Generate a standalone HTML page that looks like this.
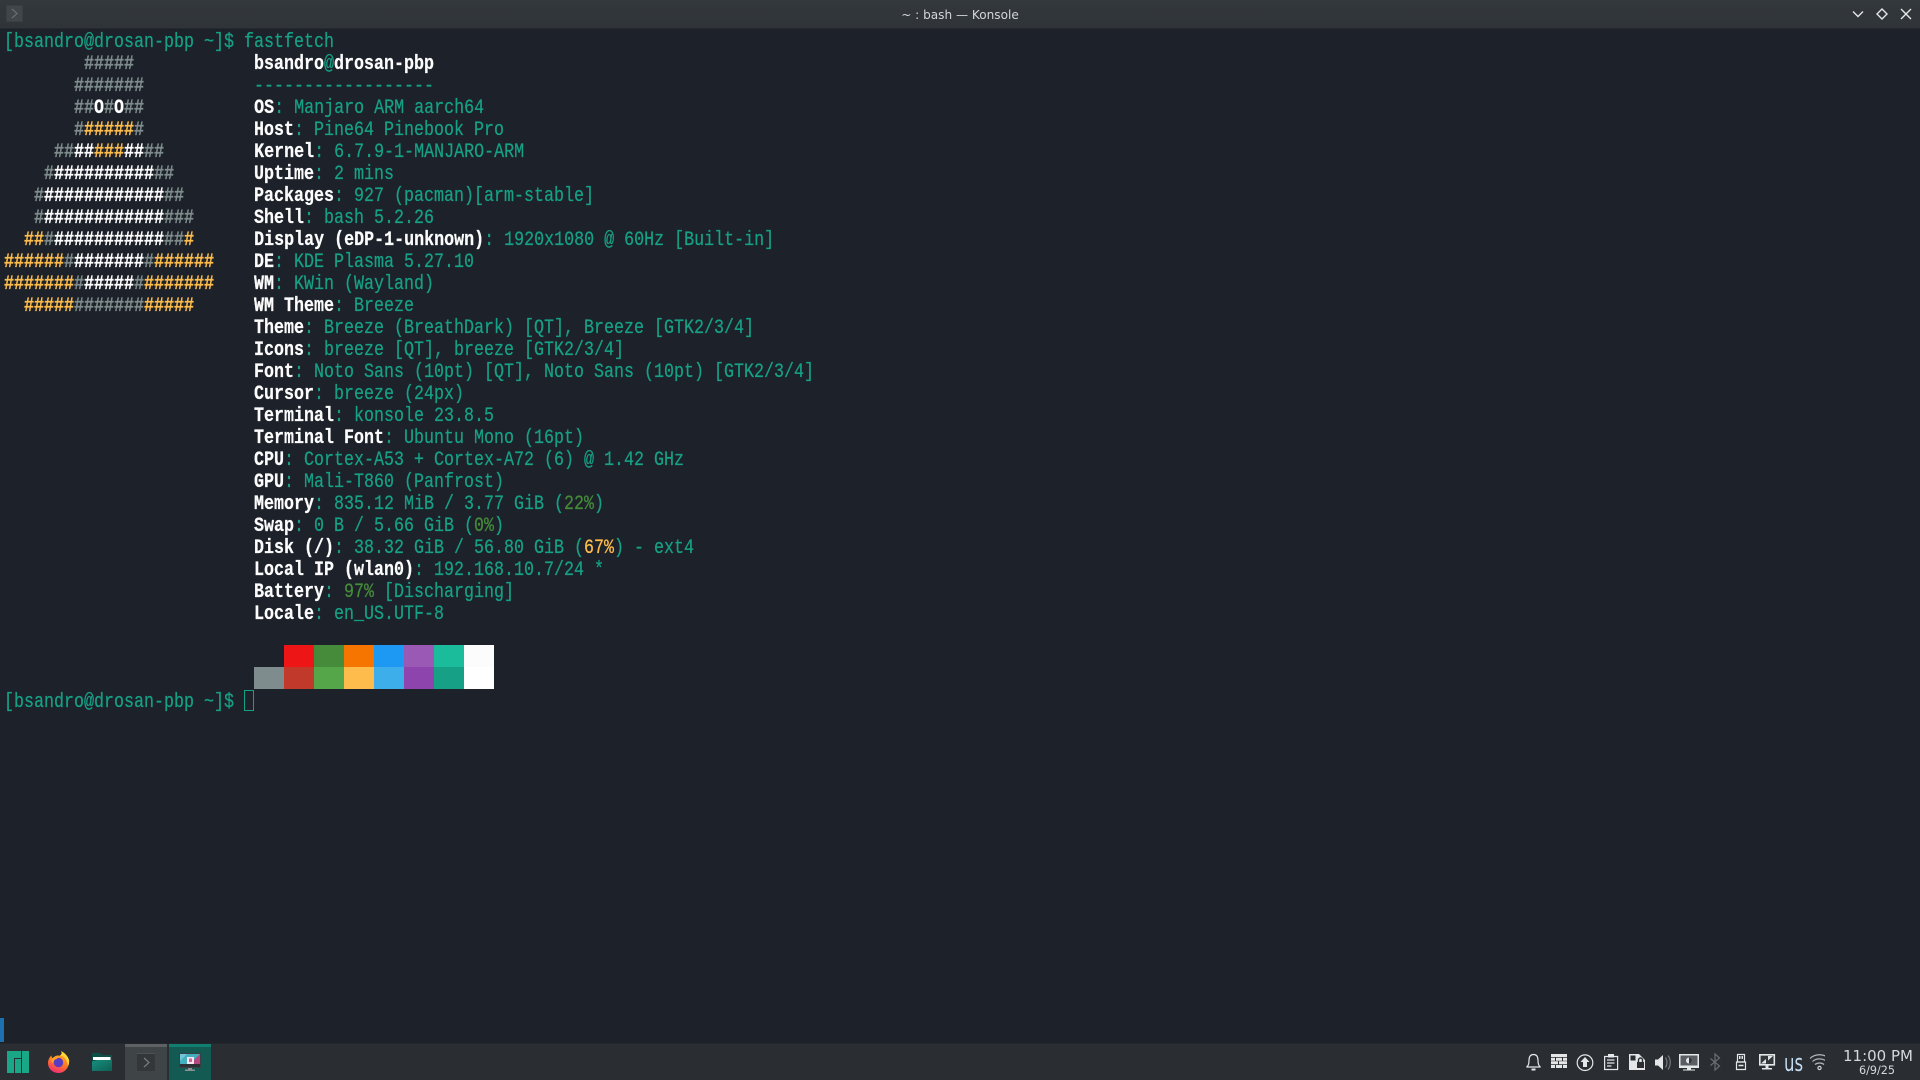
<!DOCTYPE html>
<html><head><meta charset="utf-8"><title>bash — Konsole</title>
<style>
html,body{margin:0;padding:0;width:1920px;height:1080px;overflow:hidden;background:#1d2129}
.abs{position:absolute}
#title{left:0;top:0;width:1920px;height:28px;background:linear-gradient(#33383c,#2f3438);border-bottom:1px solid #25282c;box-sizing:content-box}
#ttext{left:0;top:1px;width:1920px;text-align:center;color:#d3d6d8;font:12.1px/28px "DejaVu Sans","Liberation Sans",sans-serif}
#term{left:4px;top:32px;margin:0;font:20px/22px "Liberation Mono",monospace;color:#16a085;white-space:pre;transform:scaleX(.8332);transform-origin:0 0;-webkit-text-stroke:.25px currentColor}
b{color:#fcfcfc;font-weight:bold}
.g{color:#7f8c8d;font-weight:bold}.w{color:#fff;font-weight:bold}.o{color:#fdbc4b;font-weight:bold}
.gr{color:#458b3a}.or{color:#fdbc4b}
.sw{position:absolute;width:30px;height:22px}
#bar{left:0;top:1043px;width:1920px;height:37px;background:#2a2e32;border-top:1px solid #23262b;box-sizing:border-box}
.txt{position:absolute;color:#d6d9db;font-family:"DejaVu Sans","Liberation Sans",sans-serif;white-space:pre}
</style></head><body>
<div class="abs" id="title"></div>
<div class="abs" id="ttext">~ : bash — Konsole</div>
<svg class="abs" style="left:6px;top:5px" width="17" height="17" viewBox="0 0 17 17"><rect width="16" height="16" x=".5" y=".5" fill="#41464a" stroke="#3a3f42"/><path d="M6 4l5 4.500L6 13" fill="none" stroke="#6f7477" stroke-width="1.1"/></svg>
<svg class="abs" style="left:1850px;top:6px" width="66" height="16" viewBox="0 0 66 16" fill="none" stroke="#e4e6e7" stroke-width="1.4"><path d="M3 5.500l5 5 5-5"/><path d="M32 3l5 5-5 5-5-5z"/><path d="M51 3l10 10M61 3L51 13"/></svg>

<pre class="abs" id="term">[bsandro@drosan-pbp ~]$ fastfetch
        <span class="g">#####</span>            <b>bsandro</b>@<b>drosan-pbp</b>
       <span class="g">#######</span>           ------------------
       <span class="g">##</span><span class="w">O</span><span class="g">#</span><span class="w">O</span><span class="g">##</span>           <b>OS</b>: Manjaro ARM aarch64
       <span class="g">#</span><span class="o">#####</span><span class="g">#</span>           <b>Host</b>: Pine64 Pinebook Pro
     <span class="g">##</span><span class="w">##</span><span class="o">###</span><span class="w">##</span><span class="g">##</span>         <b>Kernel</b>: 6.7.9-1-MANJARO-ARM
    <span class="g">#</span><span class="w">##########</span><span class="g">##</span>        <b>Uptime</b>: 2 mins
   <span class="g">#</span><span class="w">############</span><span class="g">##</span>       <b>Packages</b>: 927 (pacman)[arm-stable]
   <span class="g">#</span><span class="w">############</span><span class="g">###</span>      <b>Shell</b>: bash 5.2.26
  <span class="o">##</span><span class="g">#</span><span class="w">###########</span><span class="g">##</span><span class="o">#</span>      <b>Display (eDP-1-unknown)</b>: 1920x1080 @ 60Hz [Built-in]
<span class="o">######</span><span class="g">#</span><span class="w">#######</span><span class="g">#</span><span class="o">######</span>    <b>DE</b>: KDE Plasma 5.27.10
<span class="o">#######</span><span class="g">#</span><span class="w">#####</span><span class="g">#</span><span class="o">#######</span>    <b>WM</b>: KWin (Wayland)
  <span class="o">#####</span><span class="g">#######</span><span class="o">#####</span>      <b>WM Theme</b>: Breeze
                         <b>Theme</b>: Breeze (BreathDark) [QT], Breeze [GTK2/3/4]
                         <b>Icons</b>: breeze [QT], breeze [GTK2/3/4]
                         <b>Font</b>: Noto Sans (10pt) [QT], Noto Sans (10pt) [GTK2/3/4]
                         <b>Cursor</b>: breeze (24px)
                         <b>Terminal</b>: konsole 23.8.5
                         <b>Terminal Font</b>: Ubuntu Mono (16pt)
                         <b>CPU</b>: Cortex-A53 + Cortex-A72 (6) @ 1.42 GHz
                         <b>GPU</b>: Mali-T860 (Panfrost)
                         <b>Memory</b>: 835.12 MiB / 3.77 GiB (<span class="gr">22%</span>)
                         <b>Swap</b>: 0 B / 5.66 GiB (<span class="gr">0%</span>)
                         <b>Disk (/)</b>: 38.32 GiB / 56.80 GiB (<span class="or">67%</span>) - ext4
                         <b>Local IP (wlan0)</b>: 192.168.10.7/24 *
                         <b>Battery</b>: <span class="gr">97%</span> [Discharging]
                         <b>Locale</b>: en_US.UTF-8



[bsandro@drosan-pbp ~]$ </pre>

<div class="sw" style="left:254px;top:667px;background:#7f8c8d"></div>
<div class="sw" style="left:284px;top:645px;background:#ed1515"></div>
<div class="sw" style="left:314px;top:645px;background:#458b3a"></div>
<div class="sw" style="left:344px;top:645px;background:#f67400"></div>
<div class="sw" style="left:374px;top:645px;background:#1d99f3"></div>
<div class="sw" style="left:404px;top:645px;background:#9b59b6"></div>
<div class="sw" style="left:434px;top:645px;background:#1abc9c"></div>
<div class="sw" style="left:464px;top:645px;background:#fcfcfc"></div>
<div class="sw" style="left:284px;top:667px;background:#c0392b"></div>
<div class="sw" style="left:314px;top:667px;background:#55a649"></div>
<div class="sw" style="left:344px;top:667px;background:#fdbc4b"></div>
<div class="sw" style="left:374px;top:667px;background:#3daee9"></div>
<div class="sw" style="left:404px;top:667px;background:#8e44ad"></div>
<div class="sw" style="left:434px;top:667px;background:#16a085"></div>
<div class="sw" style="left:464px;top:667px;background:#fff"></div>
<div class="abs" style="left:244px;top:690px;width:8px;height:19px;border:1px solid #16a085"></div>

<div class="abs" style="left:0;top:1018px;width:4px;height:24px;background:#1d6fae"></div>

<div class="abs" id="bar"></div>
<div class="abs" style="left:125px;top:1044px;width:42px;height:36px;background:#3f4447"></div>
<div class="abs" style="left:125px;top:1044px;width:42px;height:3px;background:#5d6164"></div>
<div class="abs" style="left:169px;top:1044px;width:42px;height:36px;background:#135a53"></div>
<div class="abs" style="left:169px;top:1044px;width:42px;height:3px;background:#0f7f6f"></div>

<!-- Manjaro -->
<svg class="abs" style="left:7px;top:1051px" width="22" height="22" viewBox="0 0 22 22" fill="#1aa787"><path d="M0 0h14v7H7v15H0z"/><path d="M8 8h6v14H8z"/><path d="M15 0h7v22h-7z"/></svg>
<!-- Firefox -->
<svg class="abs" style="left:48px;top:1051px" width="22" height="22" viewBox="0 0 22 22"><defs><linearGradient id="ff" x1=".7" y1="0" x2=".3" y2="1"><stop offset="0" stop-color="#ffb52e"/><stop offset=".5" stop-color="#ff7d1e"/><stop offset="1" stop-color="#f02a78"/></linearGradient></defs><path d="M13 0c4 2 7 5.500 8 9 1 6-3.500 13-10.500 13C4.500 22 0 17.500 0 12 0 9 1.500 6 3.500 4.500 3.500 6 4 7 5 7.500 6 5.500 8 4.500 10 4.500c.5 0 1 .1 1.500.2C13.500 4 14.500 2 13 0z" fill="url(#ff)"/><path d="M13 0c4 2 7 5.500 8 9 .3 2-.1 4-1 6-.5-4-2-7.500-5-9.500-.8-.6-2-1-3.500-.8C13.500 4 14.500 2 13 0z" fill="#ffd53a"/><circle cx="10.500" cy="11.500" r="4.700" fill="#5a3cc2"/><path d="M3 9c2-3.500 6.500-5 10-3-2 0-3.500 1-4.500 2-2 .5-3.500 2-3.500 4-1 0-1.700-1.500-2-3z" fill="#ffa02a"/></svg>
<!-- Folder -->
<svg class="abs" style="left:92px;top:1053px" width="20" height="18" viewBox="0 0 20 18"><defs><linearGradient id="fd" x1="0" y1="0" x2="1" y2="1"><stop offset="0" stop-color="#16907f"/><stop offset="1" stop-color="#0e5f54"/></linearGradient></defs><path d="M0 0h8.500l1.500 2h10v15.500H0z" fill="#0b4f47"/><path d="M1 4h17.500v3H1z" fill="#fff"/><path d="M0 8.500l6-1.500h14v11H0z" fill="url(#fd)"/></svg>
<!-- Konsole task -->
<svg class="abs" style="left:137px;top:1053px" width="18" height="18" viewBox="0 0 18 18"><rect width="18" height="18" fill="#33373a"/><path d="M0 0h18v1H0z" fill="#4d5154"/><path d="M7 5l5 4.500L7 14" fill="none" stroke="#787c7f" stroke-width="1.200"/></svg>
<!-- Display task -->
<svg class="abs" style="left:179px;top:1053px" width="22" height="18" viewBox="0 0 22 18"><rect x="0" y="0" width="22" height="15" rx="1" fill="#3a3f44"/><path d="M1 1h20v10H1z" fill="#44aebf"/><path d="M11 11L21 1v10z" fill="#b3477f"/><path d="M1 8L8 1H1z" fill="#6fc7d6"/><path d="M1 11h20v3H1z" fill="#2c3034"/><rect x="8" y="4" width="7" height="7" fill="#f3e4ee"/><rect x="10" y="5.500" width="3" height="3.500" fill="#c9679a"/><path d="M9 15h4v1.500H9zM6 16.500h10V18H6z" fill="#8a8f92"/></svg>

<!-- Tray -->
<svg class="abs" style="left:1525px;top:1050px" width="300" height="28" viewBox="0 0 300 28" fill="none" stroke="#e4e6e7" stroke-width="1.200">
<!-- bell -->
<path d="M1.500 17c2-1 2.500-3 2.500-6.500 0-4 1.500-6 4.500-6s4.500 2 4.500 6c0 3.500.5 5.500 2.500 6.500z"/><path d="M6.500 19.500h4" stroke-width="2"/>
<!-- brick grid -->
<path d="M26 4h16v3H26zM26 7.700h4v3h-4zM31 7.700h6v3h-6zM38 7.700h4v3h-4zM26 11.300h7v3h-7zM34 11.300h8v3h-8zM26 15h4v3h-4zM31 15h6v3h-6zM38 15h4v3h-4z" fill="#e4e6e7" stroke="none"/>
<!-- update circle -->
<circle cx="60" cy="12.700" r="7.800"/><path d="M60 7l4.500 5H62v5h-4v-5h-2.500z" fill="#e4e6e7" stroke="none"/>
<!-- clipboard -->
<path d="M79.600 6.500h13v13h-13z"/><path d="M83 4h6v3.500h-6z" fill="#e4e6e7" stroke="none"/><path d="M82 10h7.500M82 13h7.500M82 16h4.500"/>
<!-- vault -->
<path d="M104 4h10l6 6v10h-16z" fill="#e4e6e7" stroke="none"/><path d="M105.500 5.500h5v5h-5z" fill="#2a2e32" stroke="none"/><path d="M112 12h7v6h-7z" fill="#2a2e32" stroke="none"/><path d="M113.500 12v-2a2 2 0 0 1 4 0v2" stroke="#2a2e32" stroke-width="1.400"/>
<!-- volume -->
<path d="M130 9.500h3l5-4.500v15l-5-4.500h-3z" fill="#e4e6e7" stroke="none"/><path d="M140.500 7.500c2 3 2 7 0 10M143 5.500c3 4 3 10 0 14" stroke="#777b7e"/>
<!-- monitor -->
<path d="M154 4h20v14h-20z" fill="#e4e6e7" stroke="none"/><path d="M155.500 5.500h17v10h-17z" fill="#5a5e62" stroke="none"/><circle cx="164" cy="10.500" r="3" fill="#e4e6e7" stroke="none"/><path d="M164 7.500v6a3 3 0 0 0 0-6" fill="#33373a" stroke="none"/><path d="M162 18h4v1.500h-4zM158 19.500h12v1h-12z" fill="#e4e6e7" stroke="none"/>
<!-- bluetooth -->
<path d="M185.500 8.500l9 7.500-4.500 4V4l4.500 4-9 7.500" stroke="#6a6e71"/>
<!-- usb -->
<path d="M212.500 4.500h7v7.500h-7z"/><path d="M214 6h1.500v3H214zM216.500 6h1.500v3h-1.500z" fill="#e4e6e7" stroke="none"/><path d="M211.500 12h9v7.500h-9z"/><path d="M213.500 15.500h5" stroke-width="1.500"/>
<!-- display -->
<path d="M234.800 4.800h14.500v10h-14.500z" fill="#33373a" stroke-width="1.600"/><path d="M236 13.500l5-4.500v4.500zM248 6l-5 4.500V6z" fill="#e4e6e7" stroke="none"/><path d="M240.500 15.500h3v2.500h-3zM237 18h10v1.500h-10z" fill="#e4e6e7" stroke="none"/>
<!-- wifi -->
<path d="M285 8.500c5-5 14-5 19 0M287.500 11.500c3.500-3.500 10.500-3.500 14 0M290 14.500c2.500-2 6.500-2 9 0" stroke="#b4b7b9"/><circle cx="294.500" cy="18" r="1.600" stroke="#d0d3d5"/>
</svg>
<div class="txt" style="left:1784px;top:1049px;font-size:24px;line-height:28px;color:#c5dcf0;transform:scaleX(.69);transform-origin:0 0">us</div>
<div class="txt" style="left:1843px;top:1047px;width:68px;text-align:center;font-size:15px;line-height:18px">11:00 PM</div>
<div class="txt" style="left:1843px;top:1064px;width:68px;text-align:center;font-size:11.200px;line-height:14px">6/9/25</div>
</body></html>
